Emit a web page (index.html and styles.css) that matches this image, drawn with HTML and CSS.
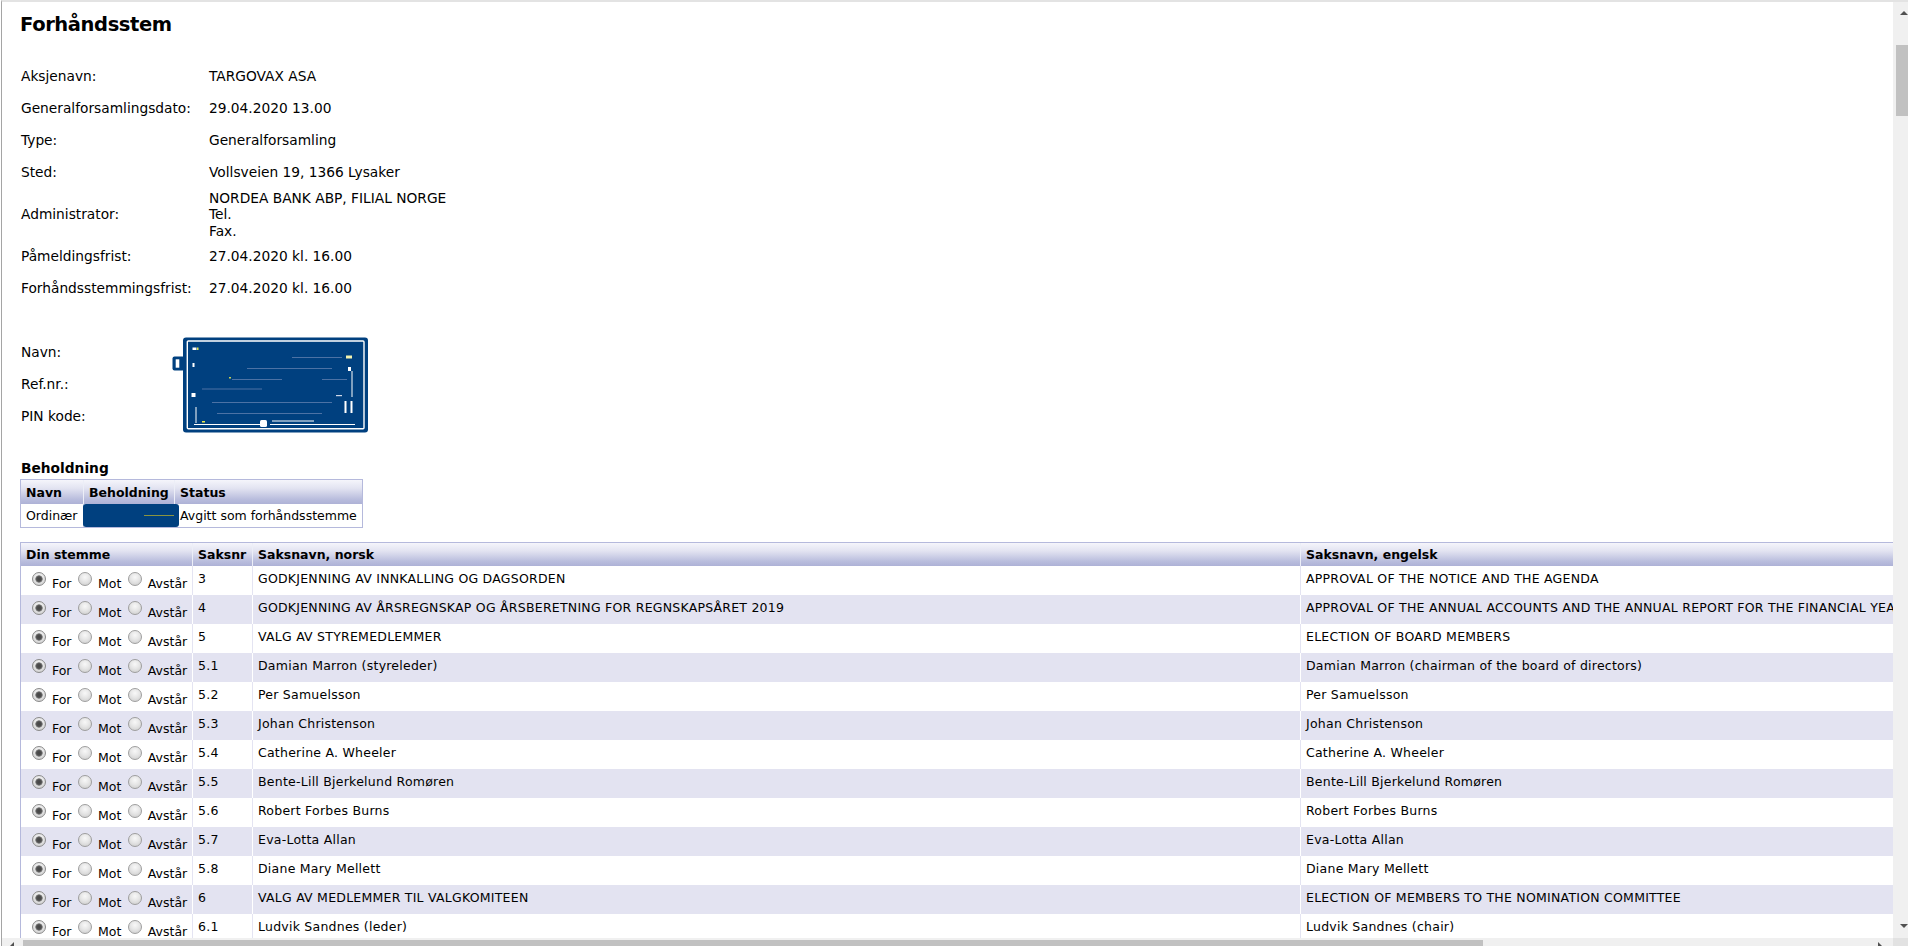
FILE: index.html
```html
<!DOCTYPE html>
<html lang="no">
<head>
    <meta charset="UTF-8">
    <title>Forhåndsstem</title>
    <link rel="stylesheet" href="styles.css">
</head>
<body>
    <div class="frame">
        <div class="viewport">
            <div class="page">
                <h1>Forhåndsstem</h1>

                <table class="info">
                    <tr><td class="label">Aksjenavn:</td><td>TARGOVAX ASA</td></tr>
                    <tr><td class="label">Generalforsamlingsdato:</td><td>29.04.2020 13.00</td></tr>
                    <tr><td class="label">Type:</td><td>Generalforsamling</td></tr>
                    <tr><td class="label">Sted:</td><td>Vollsveien 19, 1366 Lysaker</td></tr>
                    <tr><td class="label">Administrator:</td><td>NORDEA BANK ABP, FILIAL NORGE<br>Tel.<br>Fax.</td></tr>
                    <tr><td class="label">Påmeldingsfrist:</td><td>27.04.2020 kl. 16.00</td></tr>
                    <tr><td class="label">Forhåndsstemmingsfrist:</td><td>27.04.2020 kl. 16.00</td></tr>
                </table>

                <div class="login">
                    <div class="login-label">Navn:</div>
                    <div class="login-label">Ref.nr.:</div>
                    <div class="login-label">PIN kode:</div>
                    <svg class="masked-box" width="196" height="96" viewBox="0 0 196 96">
                        <rect x="0.5" y="19.5" width="12" height="14" rx="2" fill="#00407f"/>
                        <rect x="3.7" y="22.3" width="3.6" height="8.4" fill="#fff"/>
                        <rect x="11" y="0.5" width="185" height="95" rx="3" fill="#00407f"/>
                        <rect x="15.3" y="4" width="176.7" height="87.7" rx="1" fill="none" stroke="#fff" stroke-width="1.4"/>
                        <rect x="18" y="7" width="170" height="82" fill="#00407f"/>
                        <rect x="20.5" y="10.5" width="4" height="2.5" fill="#fff"/>
                        <rect x="25" y="10.5" width="1.5" height="2.5" fill="#e8e84a"/>
                        <rect x="20.5" y="26" width="2" height="4" fill="#fff"/>
                        <rect x="19.5" y="56" width="4" height="4" fill="#fff"/>
                        <rect x="174" y="18.5" width="6" height="3" fill="#f4f4b0"/>
                        <rect x="176" y="30" width="3" height="4" fill="#fff"/>
                        <rect x="172.5" y="64" width="2" height="12" fill="#fff"/>
                        <rect x="178.5" y="64" width="2" height="12" fill="#fff"/>
                        <path d="M75 31.5H160M60 42.5H110M40 65.5H160M45 76.5H150M30 52H90M120 20.5H170M150 42.5H175" stroke="#5f7fae" stroke-width="0.8" fill="none"/>
                        <path d="M100 84H142M98 87.5H183M22 87.5H88M24 70V86M180 34V60" stroke="#fff" stroke-width="1" fill="none"/>
                        <rect x="88" y="83" width="7" height="7" rx="1.5" fill="#fff"/>
                        <rect x="30" y="84" width="3" height="1.5" fill="#e8e84a"/>
                        <rect x="57" y="40" width="2" height="1.5" fill="#c8d050"/>
                        <rect x="164" y="58" width="6" height="1.2" fill="#cfd8e8"/>
                    </svg>
                </div>

                <h2>Beholdning</h2>
                <table class="grid holding">
                    <thead>
                        <tr><th class="h-navn">Navn</th><th class="h-behold">Beholdning</th><th>Status</th></tr>
                    </thead>
                    <tbody>
                        <tr>
                            <td>Ordinær</td>
                            <td class="masked"><span class="mask"></span></td>
                            <td>Avgitt som forhåndsstemme</td>
                        </tr>
                    </tbody>
                </table>

                <table class="grid votes">
                    <thead>
                        <tr>
                            <th class="c-vote">Din stemme</th>
                            <th class="c-nr">Saksnr</th>
                            <th class="c-no">Saksnavn, norsk</th>
                            <th class="c-en">Saksnavn, engelsk</th>
                        </tr>
                    </thead>
                    <tbody>
                        <tr>
                            <td class="vote"><label><input type="radio" name="s1" checked> For</label> <label><input type="radio" name="s1"> Mot</label> <label><input type="radio" name="s1"> Avstår</label></td>
                            <td>3</td>
                            <td>GODKJENNING AV INNKALLING OG DAGSORDEN</td>
                            <td>APPROVAL OF THE NOTICE AND THE AGENDA</td>
                        </tr>
                        <tr>
                            <td class="vote"><label><input type="radio" name="s2" checked> For</label> <label><input type="radio" name="s2"> Mot</label> <label><input type="radio" name="s2"> Avstår</label></td>
                            <td>4</td>
                            <td>GODKJENNING AV ÅRSREGNSKAP OG ÅRSBERETNING FOR REGNSKAPSÅRET 2019</td>
                            <td>APPROVAL OF THE ANNUAL ACCOUNTS AND THE ANNUAL REPORT FOR THE FINANCIAL YEAR 2019</td>
                        </tr>
                        <tr>
                            <td class="vote"><label><input type="radio" name="s3" checked> For</label> <label><input type="radio" name="s3"> Mot</label> <label><input type="radio" name="s3"> Avstår</label></td>
                            <td>5</td>
                            <td>VALG AV STYREMEDLEMMER</td>
                            <td>ELECTION OF BOARD MEMBERS</td>
                        </tr>
                        <tr>
                            <td class="vote"><label><input type="radio" name="s4" checked> For</label> <label><input type="radio" name="s4"> Mot</label> <label><input type="radio" name="s4"> Avstår</label></td>
                            <td>5.1</td>
                            <td>Damian Marron (styreleder)</td>
                            <td>Damian Marron (chairman of the board of directors)</td>
                        </tr>
                        <tr>
                            <td class="vote"><label><input type="radio" name="s5" checked> For</label> <label><input type="radio" name="s5"> Mot</label> <label><input type="radio" name="s5"> Avstår</label></td>
                            <td>5.2</td>
                            <td>Per Samuelsson</td>
                            <td>Per Samuelsson</td>
                        </tr>
                        <tr>
                            <td class="vote"><label><input type="radio" name="s6" checked> For</label> <label><input type="radio" name="s6"> Mot</label> <label><input type="radio" name="s6"> Avstår</label></td>
                            <td>5.3</td>
                            <td>Johan Christenson</td>
                            <td>Johan Christenson</td>
                        </tr>
                        <tr>
                            <td class="vote"><label><input type="radio" name="s7" checked> For</label> <label><input type="radio" name="s7"> Mot</label> <label><input type="radio" name="s7"> Avstår</label></td>
                            <td>5.4</td>
                            <td>Catherine A. Wheeler</td>
                            <td>Catherine A. Wheeler</td>
                        </tr>
                        <tr>
                            <td class="vote"><label><input type="radio" name="s8" checked> For</label> <label><input type="radio" name="s8"> Mot</label> <label><input type="radio" name="s8"> Avstår</label></td>
                            <td>5.5</td>
                            <td>Bente-Lill Bjerkelund Romøren</td>
                            <td>Bente-Lill Bjerkelund Romøren</td>
                        </tr>
                        <tr>
                            <td class="vote"><label><input type="radio" name="s9" checked> For</label> <label><input type="radio" name="s9"> Mot</label> <label><input type="radio" name="s9"> Avstår</label></td>
                            <td>5.6</td>
                            <td>Robert Forbes Burns</td>
                            <td>Robert Forbes Burns</td>
                        </tr>
                        <tr>
                            <td class="vote"><label><input type="radio" name="s10" checked> For</label> <label><input type="radio" name="s10"> Mot</label> <label><input type="radio" name="s10"> Avstår</label></td>
                            <td>5.7</td>
                            <td>Eva-Lotta Allan</td>
                            <td>Eva-Lotta Allan</td>
                        </tr>
                        <tr>
                            <td class="vote"><label><input type="radio" name="s11" checked> For</label> <label><input type="radio" name="s11"> Mot</label> <label><input type="radio" name="s11"> Avstår</label></td>
                            <td>5.8</td>
                            <td>Diane Mary Mellett</td>
                            <td>Diane Mary Mellett</td>
                        </tr>
                        <tr>
                            <td class="vote"><label><input type="radio" name="s12" checked> For</label> <label><input type="radio" name="s12"> Mot</label> <label><input type="radio" name="s12"> Avstår</label></td>
                            <td>6</td>
                            <td>VALG AV MEDLEMMER TIL VALGKOMITEEN</td>
                            <td>ELECTION OF MEMBERS TO THE NOMINATION COMMITTEE</td>
                        </tr>
                        <tr>
                            <td class="vote"><label><input type="radio" name="s13" checked> For</label> <label><input type="radio" name="s13"> Mot</label> <label><input type="radio" name="s13"> Avstår</label></td>
                            <td>6.1</td>
                            <td>Ludvik Sandnes (leder)</td>
                            <td>Ludvik Sandnes (chair)</td>
                        </tr>
                    </tbody>
                </table>
            </div>
        </div>

        <!-- frame scrollbars -->
        <div class="vscroll">
            <span class="arrow up"></span>
            <div class="thumb"></div>
            <span class="arrow down"></span>
        </div>
        <div class="hscroll">
            <span class="arrow left"></span>
            <div class="thumb"></div>
            <span class="arrow right"></span>
        </div>
        <div class="corner"></div>
    </div>
</body>
</html>
```

FILE: styles.css
```css
:root {
    --text-color: #000;
    --mask-color: #00407f;
    --grid-border: #b5b9dc;
    --row-alt: #e3e3f1;
    --scroll-track: #f0f0f0;
    --scroll-thumb: #c1c1c1;
    --arrow-color: #505050;
}

* {
    box-sizing: border-box;
}

html, body {
    margin: 0;
    padding: 0;
    height: 100%;
    background: #fff;
}

body {
    font-family: 'DejaVu Sans', Verdana, sans-serif;
    color: var(--text-color);
    overflow: hidden;
}

.frame {
    display: grid;
    grid-template-columns: 1fr 15px;
    grid-template-rows: 1fr 8px;
    height: 100vh;
    margin-left: 1px;
    border-left: 1px solid #a5a5a5;
    border-top: 2px solid #e3e3e3;
}

.viewport {
    overflow: hidden;
    background: #fff;
}

.page {
    padding: 11px 0 0 18px;
}

h1 {
    font-size: 19.5px;
    line-height: 24px;
    letter-spacing: -0.4px;
    font-weight: bold;
    margin: 0 0 23px;
}

/* general info */
.info {
    border-spacing: 0;
    font-size: 13.75px;
    line-height: 16.5px;
}

.info tr {
    height: 32px;
}

.info td {
    padding: 1.5px 1px;
    vertical-align: middle;
    white-space: nowrap;
}

.info td.label {
    width: 188px;
}

/* login block */
.login {
    display: grid;
    grid-template-columns: 152px auto;
    grid-template-rows: repeat(3, 32px);
    margin-top: 32px;
    font-size: 13.75px;
    line-height: 16.5px;
}

.login-label {
    grid-column: 1;
    display: flex;
    align-items: center;
    padding-left: 1px;
}

.masked-box {
    grid-column: 2;
    grid-row: 1 / span 3;
    display: block;
}

h2 {
    font-size: 13.75px;
    line-height: 16.5px;
    font-weight: bold;
    margin: 27.5px 0 2px;
    padding-left: 1px;
}

/* shared grid tables */
.grid {
    border-collapse: separate;
    border-spacing: 0;
    border: 1px solid var(--grid-border);
    table-layout: fixed;
    font-size: 12.5px;
}

.grid th {
    text-align: left;
    font-weight: bold;
    line-height: 15px;
    padding: 4px 5px;
    white-space: nowrap;
    background: linear-gradient(to bottom, #f5f5fb 0%, #e2e3f1 35%, #b9bddd 80%, #aeb2d6 100%);
    border-right: 1px solid #eceef7;
}

.grid th:last-child {
    border-right: none;
}

.grid td {
    line-height: 15.2px;
    white-space: nowrap;
    vertical-align: top;
    letter-spacing: 0.24px;
    border-right: 1px solid #e4e4f2;
}

.grid td:last-child {
    border-right: none;
}

/* holding */
.holding {
    width: 343px;
}

.holding th {
    padding: 5px 5px 4px;
}

.holding .h-navn {
    width: 63px;
}

.holding .h-behold {
    width: 91px;
}

.holding td {
    padding: 4px 5px 3.8px;
    line-height: 15px;
    letter-spacing: 0;
    border-right-color: #d4d6ec;
}

.holding td.masked {
    padding: 0;
}

.mask {
    display: block;
    height: 23px;
    margin: 0 -5px 0 -1px;
    border-radius: 3px;
    background: linear-gradient(#8a9440, #8a9440) no-repeat 61px 11px / 30px 1px, var(--mask-color);
}

/* votes */
.votes {
    width: 2382px;
    margin-top: 14.5px;
}

.votes .c-vote { width: 172px; }
.votes .c-nr { width: 60px; }
.votes .c-no { width: 1048px; }

.votes tbody tr {
    height: 29px;
}

.votes tbody tr:nth-child(even) {
    background: var(--row-alt);
}

.votes tbody tr:nth-child(even) td {
    border-right-color: #fff;
}

.votes td {
    padding: 5px 5px 4px;
}

.votes td.vote {
    padding: 5px 0 4px 8.5px;
    letter-spacing: 0;
}

.vote input {
    -webkit-appearance: none;
    appearance: none;
    display: inline-block;
    width: 14px;
    height: 14px;
    margin: 1px 2px 0 2.5px;
    vertical-align: 1.6px;
    border: 1px solid #9e9e9e;
    border-radius: 50%;
    background: radial-gradient(circle at 50% 35%, #f8f8f8 0%, #e6e6e6 45%, #c9c9c9 100%);
}

.vote input:checked {
    border-color: #8a8a8a;
    background: radial-gradient(circle at 50% 50%, #444 0, #505050 2.4px, #858585 3.4px, rgba(0, 0, 0, 0) 4px),
                radial-gradient(circle at 50% 35%, #f8f8f8 0%, #e6e6e6 45%, #c6c6c6 100%);
}

/* scrollbars */
.vscroll {
    display: flex;
    flex-direction: column;
    background: var(--scroll-track);
}

.vscroll .thumb {
    width: 12px;
    height: 71px;
    margin: 30px 0 0 3px;
    background: var(--scroll-thumb);
}

.hscroll {
    display: flex;
    align-items: flex-start;
    background: var(--scroll-track);
}

.hscroll .thumb {
    width: 1460px;
    height: 7px;
    margin: 1.5px 0 0 9px;
    background: var(--scroll-thumb);
}

.corner {
    background: #e2e2e2;
}

.arrow {
    display: block;
    width: 0;
    height: 0;
}

.arrow.up {
    margin: 9px 0 0 7px;
    border-left: 4px solid transparent;
    border-right: 4px solid transparent;
    border-bottom: 4px solid var(--arrow-color);
}

.arrow.down {
    margin: auto 0 10px 7px;
    border-left: 4px solid transparent;
    border-right: 4px solid transparent;
    border-top: 4px solid var(--arrow-color);
}

.arrow.left {
    margin: 4px 0 0 8px;
    border-top: 4px solid transparent;
    border-bottom: 4px solid transparent;
    border-right: 4px solid var(--arrow-color);
}

.arrow.right {
    margin: 4px 11px 0 auto;
    border-top: 4px solid transparent;
    border-bottom: 4px solid transparent;
    border-left: 4px solid var(--arrow-color);
}
```
